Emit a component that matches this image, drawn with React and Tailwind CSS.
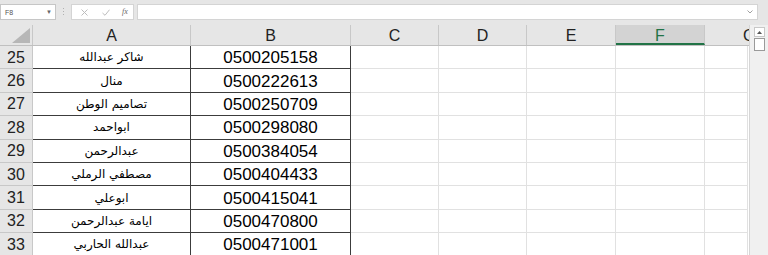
const rows = [
  [25, 'شاكر عبدالله', '0500205158'],
  [26, 'منال', '0500222613'],
  [27, 'تصاميم الوطن', '0500250709'],
  [28, 'ابواحمد', '0500298080'],
  [29, 'عبدالرحمن', '0500384054'],
  [30, 'مصطفي الرملي', '0500404433'],
  [31, 'ابوعلي', '0500415041'],
  [32, 'ايامة عبدالرحمن', '0500470800'],
  [33, 'عبدالله الحاربي', '0500471001'],
];

const cols = [
  { id: 'C', w: 'w-[88px]' },
  { id: 'D', w: 'w-[88px]' },
  { id: 'E', w: 'w-[89px]' },
  { id: 'F', w: 'w-[89px]' },
];

function Toolbar() {
  return (
    <div className="flex h-[25px] items-start bg-[#e6e6e6] pt-[4px]">
      <div className="flex h-[16px] w-[56px] items-center justify-between border border-[#c6c6c6] bg-white pl-[4px] pr-[3px]">
        <span className="text-[7px] leading-none text-[#555]">F8</span>
        <span className="text-[6px] leading-none text-[#666]">▼</span>
      </div>
      <div className="ml-[7px] mr-[7px] mt-[4px] flex flex-col gap-[2px]">
        <span className="h-[1px] w-[1px] bg-[#b0b0b0]" />
        <span className="h-[1px] w-[1px] bg-[#b0b0b0]" />
        <span className="h-[1px] w-[1px] bg-[#b0b0b0]" />
      </div>
      <div className="flex h-[16px] w-[63px] items-center border border-[#d4d4d4] bg-white pl-[9px] text-[#b8b8b8]">
        <svg width="7" height="7" viewBox="0 0 7 7" className="mr-[14px]">
          <path d="M0.5 0.5L6.5 6.5M6.5 0.5L0.5 6.5" stroke="#bdbdbd" strokeWidth="1" />
        </svg>
        <svg width="8" height="7" viewBox="0 0 8 7" className="mr-[12px]">
          <path d="M0.5 4L3 6.3L7.5 0.7" stroke="#bdbdbd" strokeWidth="1" fill="none" />
        </svg>
        <span className="text-[8px] italic leading-none text-[#666] [font-family:'Liberation_Serif',serif]">fx</span>
      </div>
      <div className="ml-[3px] flex h-[16px] w-[621px] items-center justify-end border border-[#d4d4d4] bg-white pr-[4px]">
        <svg width="6" height="4" viewBox="0 0 6 4">
          <path d="M0.5 0.5L3 3L5.5 0.5" stroke="#888" strokeWidth="0.8" fill="none" />
        </svg>
      </div>
    </div>
  );
}

function Header() {
  return (
    <div className="flex h-[21px] border-b border-[#c0c0c0] bg-[#e6e6e6] text-[16px] leading-none text-[#222]">
      <div className="relative w-[33px] border-r border-[#c8c8c8]">
        <svg width="20" height="15" viewBox="0 0 20 15" className="absolute bottom-[2px] right-[2px]">
          <path d="M20 0L20 15L2 15Z" fill="#b7b7b7" />
        </svg>
      </div>
      <div className="flex w-[158px] items-center justify-center border-r border-[#c8c8c8] pt-[2px]">A</div>
      <div className="flex w-[160px] items-center justify-center border-r border-[#c8c8c8] pt-[2px]">B</div>
      {cols.map((c) =>
        c.id === 'F' ? (
          <div
            key={c.id}
            className={`${c.w} flex items-center justify-center border-b-2 border-r border-b-[#217346] border-r-[#c8c8c8] bg-[#d3d3d3] pt-[3px] text-[#217346]`}
          >
            F
          </div>
        ) : (
          <div key={c.id} className={`${c.w} flex items-center justify-center border-r border-[#c8c8c8] pt-[2px]`}>
            {c.id}
          </div>
        )
      )}
      <div className="flex w-[44px] items-center justify-end pt-[2px]">
        <span className="w-[6px] overflow-hidden">G</span>
      </div>
    </div>
  );
}

function Row({ n, name, phone }) {
  return (
    <div className="flex h-[23.4px] leading-none">
      <div className="flex w-[33px] items-center justify-center border-b border-r border-[#c8c8c8] bg-[#e6e6e6] pt-[1px] text-[16px] text-[#222]">
        {n}
      </div>
      <div
        dir="rtl"
        className="flex w-[158px] items-center justify-center border-b border-r border-[#3c3c3c] bg-white text-[12px] text-black [font-family:'DejaVu_Sans',sans-serif]"
      >
        {name}
      </div>
      <div className="flex w-[160px] items-center justify-center border-b border-r border-[#3c3c3c] bg-white pt-[1px] text-[17px] text-black">
        {phone}
      </div>
      {cols.map((c) => (
        <div key={c.id} className={`${c.w} border-b border-r border-[#e1e1e1] bg-white`} />
      ))}
      <div className="w-[43px] border-b border-r border-[#e1e1e1] bg-white" />
    </div>
  );
}

export default function App() {
  return (
    <div className="h-[255px] w-[768px] overflow-hidden bg-white [font-family:'Liberation_Sans',Arial,sans-serif]">
      <Toolbar />
      <div className="flex">
        <div className="w-[749px]">
          <Header />
          {rows.map(([n, name, phone]) => (
            <Row key={n} n={n} name={name} phone={phone} />
          ))}
        </div>
        <div className="flex w-[19px] flex-col items-center border-l border-[#d6d6d6] bg-[#f0f0f0] pt-[2px]">
          <div className="flex h-[10px] w-[11px] items-center justify-center border border-[#c8c8c8] bg-white">
            <svg width="5" height="3" viewBox="0 0 5 3">
              <path d="M0 3L2.5 0L5 3Z" fill="#555" />
            </svg>
          </div>
          <div className="mt-[1px] h-[13px] w-[11px] border border-[#9a9a9a] bg-white" />
        </div>
      </div>
    </div>
  );
}
